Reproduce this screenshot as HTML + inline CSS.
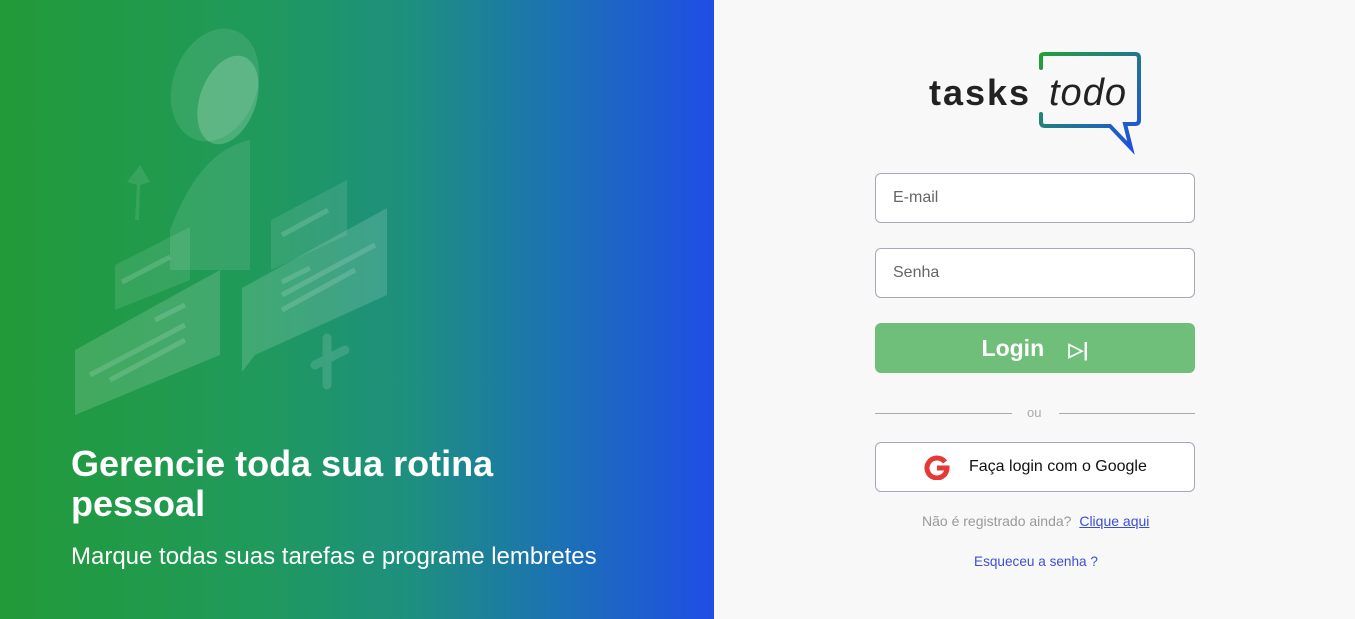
<!DOCTYPE html>
<html><head><meta charset="utf-8"><style>
*{box-sizing:border-box;margin:0;padding:0}
body{width:1355px;height:619px;overflow:hidden;font-family:"Liberation Sans",sans-serif;background:#f8f8f8;position:relative}
.left{position:absolute;left:0;top:0;width:714px;height:619px;background:linear-gradient(90deg,#229a38 0%,#209a5a 35%,#1d8f80 58%,#1c6fb8 80%,#1f4de6 100%)}
.h1{position:absolute;left:71px;top:444px;color:#fff;font-size:36px;font-weight:bold;line-height:40px;width:500px}
.sub{position:absolute;left:71px;top:543px;color:#fff;font-size:24px}
.inp{position:absolute;left:875px;width:320px;height:50px;border:1px solid #a9a6b8;border-radius:6px;background:#fff;font-size:16px;color:#666;padding:15px 17px}
.btn{position:absolute;left:875px;top:323px;width:320px;height:50px;border-radius:6px;background:#6fbe79;color:#fff;font-size:23px;font-weight:bold;text-align:center;line-height:50px}
.line{position:absolute;top:413px;height:1px;background:#aaa}
.g{position:absolute;left:875px;top:442px;width:320px;height:50px;border:1px solid #a9a6b8;border-radius:6px;background:#fff;font-size:16px;color:#111;line-height:48px;padding-left:93px}
.s{fill:rgba(255,255,255,.1)}
</style></head><body>
<div class="left">
<svg width="400" height="420" style="position:absolute;left:60px;top:20px">
<ellipse cx="155" cy="65" rx="42" ry="58" class="s" transform="rotate(20 155 65)"/>
<ellipse cx="168" cy="80" rx="28" ry="46" fill="rgba(255,255,255,.2)" transform="rotate(20 168 80)"/>
<path d="M110 210 Q140 130 190 120 L190 250 L110 250Z" class="s"/>
<path d="M75 200 L77 165 L67 162 L80 145 L90 162 L80 165 L79 200Z" class="s"/>
<path d="M55 245 L130 207 L130 260 L55 290Z" class="s"/>
<path d="M211 200 L287 160 L287 215 L211 250Z" class="s"/>
<path d="M15 330 L160 250 L160 335 L15 395Z" fill="rgba(255,255,255,.15)"/>
<path d="M182 268 L327 188 L327 275 L195 335 L182 352Z" fill="rgba(255,255,255,.15)"/>
<path d="M255 345 L285 330 M267 318 L267 365" stroke="rgba(255,255,255,.13)" stroke-width="9" stroke-linecap="round"/>
<g stroke="rgba(255,255,255,.15)" stroke-width="5"><path d="M30 355 L125 305 M50 360 L125 320 M95 300 L125 285 M222 275 L315 225 M222 290 L295 250 M222 262 L250 248 M222 215 L268 190 M62 262 L110 237"/></g>
</svg>
<div class="h1">Gerencie toda sua rotina pessoal</div>
<div class="sub">Marque todas suas tarefas e programe lembretes</div>
</div>
<svg width="220" height="110" style="position:absolute;left:925px;top:48px">
<defs><linearGradient id="lg" x1="0" y1="0" x2="1" y2="1"><stop offset="0" stop-color="#23a03a"/><stop offset="1" stop-color="#1f4de6"/></linearGradient></defs>
<path d="M116 20 L116 8 Q116 6 120 6 L210 6 Q214 6 214 10 L214 72 Q214 76 210 76 L200 76 L206 100 L185 78 L120 78 Q116 78 116 74 L116 66" fill="none" stroke="url(#lg)" stroke-width="4" stroke-linecap="round"/>
<text x="4" y="57" font-family="Liberation Sans" font-weight="bold" font-size="36" fill="#222" letter-spacing="2">tasks</text>
<text x="124" y="57" font-family="Liberation Sans" font-style="italic" font-size="38" fill="#222" letter-spacing="1">todo</text>
</svg>
<div class="inp" style="top:173px">E-mail</div>
<div class="inp" style="top:248px">Senha</div>
<div class="btn">Login <span style="margin-left:18px;font-size:19px">▷|</span></div>
<div class="line" style="left:875px;width:137px"></div>
<div style="position:absolute;left:1027px;top:405px;font-size:13px;color:#aaa">ou</div>
<div class="line" style="left:1059px;width:136px"></div>
<div class="g"><svg width="26" height="26" viewBox="0 0 26 26" style="position:absolute;left:48px;top:11px"><path d="M21 8 A10 10 0 1 0 23 14 L13 14" fill="none" stroke="#e53935" stroke-width="5"/></svg>Faça login com o Google</div>
<div style="position:absolute;left:922px;top:513px;font-size:14px;color:#999">Não é registrado ainda? <span style="color:#3b4fd6;text-decoration:underline;margin-left:4px">Clique aqui</span></div>
<div style="position:absolute;left:974px;top:554px;font-size:13.6px;color:#3b4fd6">Esqueceu a senha ?</div>
</body></html>
